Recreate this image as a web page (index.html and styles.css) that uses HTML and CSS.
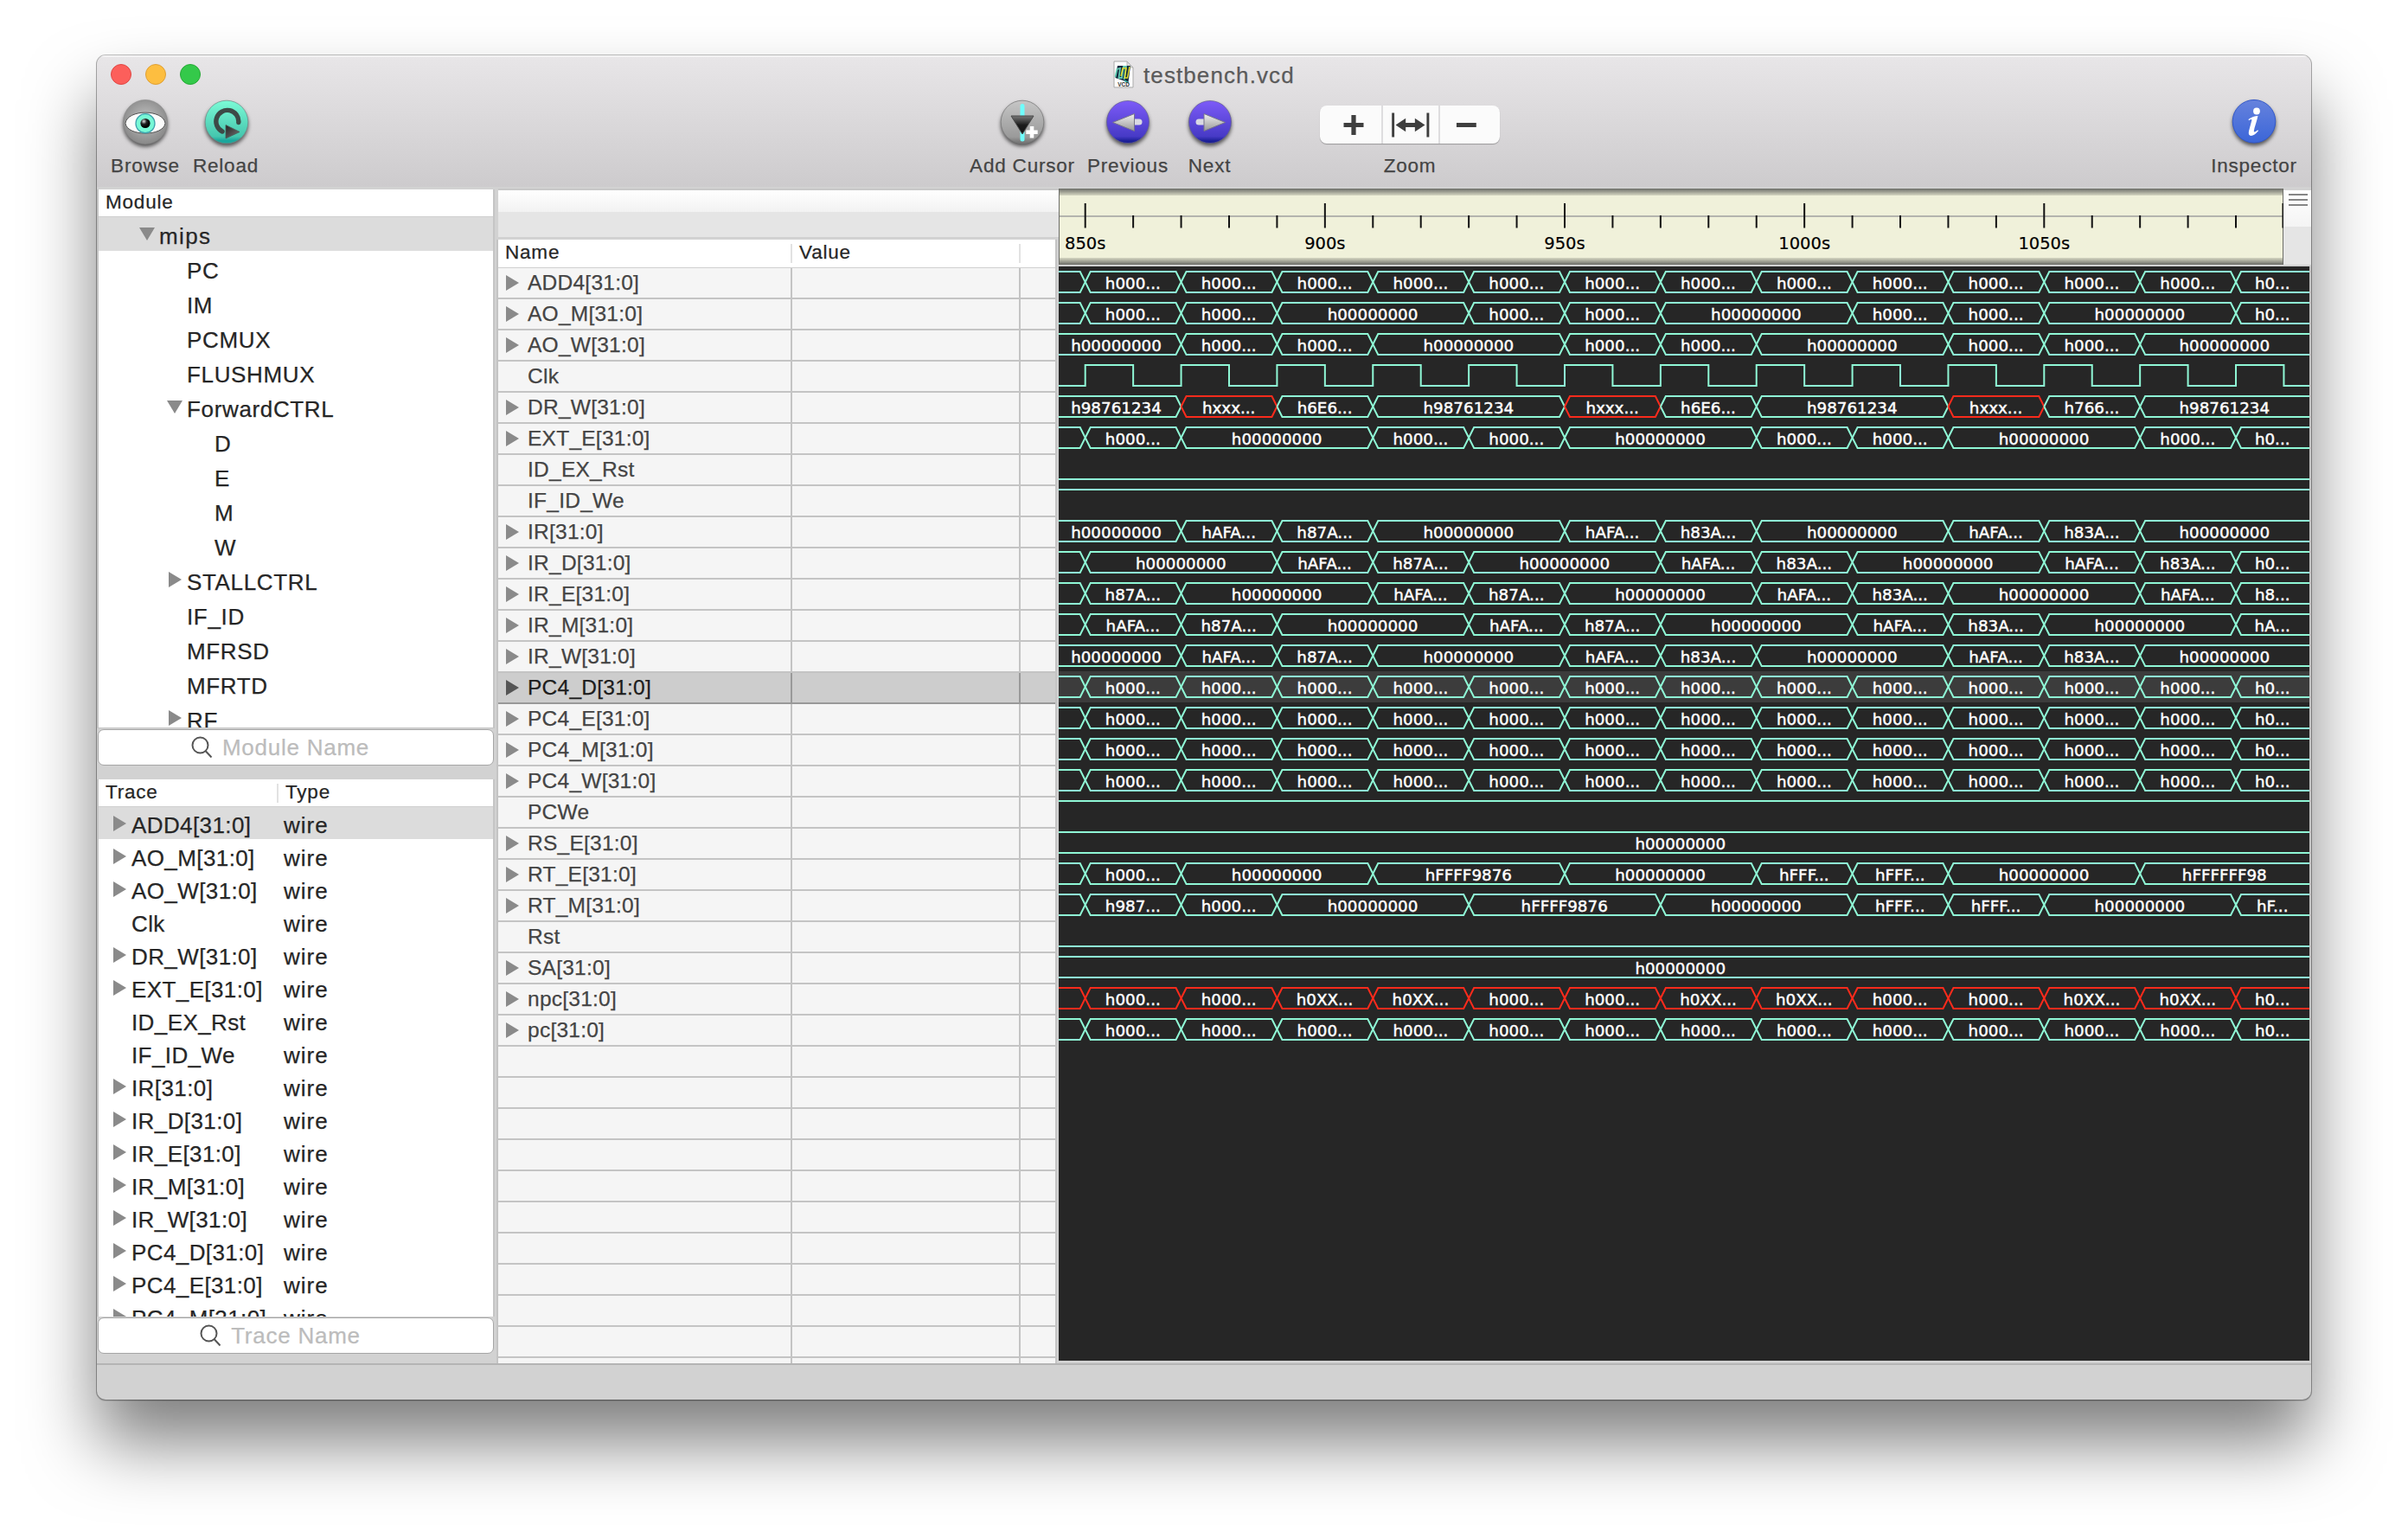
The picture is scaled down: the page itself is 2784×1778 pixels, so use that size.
FILE: index.html
```html
<!DOCTYPE html>
<html lang="en">
<head>
<meta charset="utf-8">
<title>testbench.vcd</title>
<link rel="stylesheet" href="styles.css">
</head>
<body>
<svg width="0" height="0" class="defs">
  <defs>
    <radialGradient id="eyeball" cx=".5" cy=".45" r=".55"><stop offset="0" stop-color="#c4c4c4"/><stop offset="1" stop-color="#888"/></radialGradient>
    <linearGradient id="cursorbg" x1="0" y1="0" x2="0" y2="1"><stop offset="0" stop-color="#c6c6c6"/><stop offset=".85" stop-color="#9a9a9a"/><stop offset="1" stop-color="#707070"/></linearGradient>
    <linearGradient id="teal" x1="0" y1="0" x2="0" y2="1"><stop offset="0" stop-color="#7bfbd6"/><stop offset=".84" stop-color="#45c6ae"/><stop offset=".93" stop-color="#1ba79d"/><stop offset="1" stop-color="#1ba79d"/></linearGradient>
    <linearGradient id="violet" x1="0" y1="0" x2="0" y2="1"><stop offset="0" stop-color="#7d5bf8"/><stop offset=".84" stop-color="#473ac6"/><stop offset=".95" stop-color="#1b1f96"/></linearGradient>
    <linearGradient id="blue" x1="0" y1="0" x2="0" y2="1"><stop offset="0" stop-color="#6682dd"/><stop offset="1" stop-color="#3b66d8"/></linearGradient>
    <linearGradient id="silver" x1="0" y1="0" x2="0" y2="1"><stop offset="0" stop-color="#f0f0f0"/><stop offset="1" stop-color="#999"/></linearGradient>
    <linearGradient id="dark" x1="0" y1="0" x2="0" y2="1"><stop offset="0" stop-color="#777"/><stop offset=".5" stop-color="#1c1c1c"/><stop offset="1" stop-color="#111"/></linearGradient>
    <linearGradient id="play" x1="0" y1="0" x2="1" y2="1"><stop offset="0" stop-color="#222"/><stop offset="1" stop-color="#777"/></linearGradient>
    <radialGradient id="pupil" cx=".35" cy=".3" r=".6"><stop offset="0" stop-color="#ddd"/><stop offset=".5" stop-color="#222"/><stop offset="1" stop-color="#000"/></radialGradient>
    <linearGradient id="edgeTop" x1="0" y1="0" x2="0" y2="1"><stop offset="0" stop-color="#6c6d68"/><stop offset="1" stop-color="#d6d7c2"/></linearGradient>
    <linearGradient id="edgeBottom" x1="0" y1="0" x2="0" y2="1"><stop offset="0" stop-color="#d6d7c2"/><stop offset="1" stop-color="#6c6d68"/></linearGradient>
  </defs>
</svg>

<main class="window">
  <header class="chrome">
    <div class="titlebar">
      <div class="lights"><i class="light close"></i><i class="light minimize"></i><i class="light expand"></i></div>
      <div class="title">
        <svg width="24" height="32" viewBox="0 0 24 32">
          <path d="M1 1H16L23 8V31H1Z" fill="#fdfdfd" stroke="#a9a9a9"/>
          <path d="M16 1V8H23Z" fill="#ddd" stroke="#aaa" stroke-width=".8"/>
          <path d="M5 6L20 6L17.500 25L2.500 20Z" fill="#10283e"/>
          <path d="M2.500 19L4.500 10L8 9L6.500 20H10L12 7L15 7L12.500 22" fill="none" stroke="#62c9b0" stroke-width="1.800"/>
          <path d="M9 18L11 9H15L13.500 20L16.500 20L19 7" fill="none" stroke="#e2d92c" stroke-width="1.500"/>
          <path d="M13 23L18 26" stroke="#2aa9a0" stroke-width="1.500"/>
          <text x="12" y="30" class="doctype">VCD</text>
        </svg>
        <span>testbench.vcd</span>
      </div>
    </div>
    <div class="tools">
      <div class="group left">
        <div class="tool small">
          <svg class="orb" width="60" height="60" viewBox="-30 -30 60 60">
            <circle r="25.500" fill="url(#eyeball)" stroke="#888" stroke-width=".6"/>
            <path d="M-23 1.500C-21 -15 21 -15 23 1.500C21 17 -21 17 -23 1.500Z" fill="#fbfbfb" stroke="#555" stroke-width="1"/>
            <circle cy="1.700" r="11" fill="#78f8d6" stroke="#3fa3ae" stroke-width="1.300"/>
            <circle cy="1.500" r="5.600" fill="url(#pupil)"/>
          </svg>
          <span>Browse</span>
        </div>
        <div class="tool small">
          <svg class="orb" width="60" height="60" viewBox="-30 -30 60 60">
            <circle r="24.800" fill="url(#teal)" stroke="#6b8d86" stroke-width=".7"/>
            <path d="M-5 11A13 13 0 1 1 13.800 .5" fill="none" stroke="#3d4a47" stroke-width="5.400" stroke-linecap="round"/>
            <path d="M-1 3.500L15 11.500L-1 19Z" fill="url(#play)" stroke="#4a5a57" stroke-width=".8"/>
          </svg>
          <span class="reload">Reload</span>
        </div>
      </div>
      <div class="group middle">
        <div class="tool wide">
          <svg class="orb" width="60" height="60" viewBox="-30 -30 60 60">
            <circle r="24.800" fill="url(#cursorbg)" stroke="#7b7b7b" stroke-width=".8"/>
            <path d="M0 -18.500V20" stroke="#6ffcfb" stroke-width="5" stroke-linecap="round"/>
            <path d="M-13 -7H13L0 14Z" fill="url(#dark)" stroke="#4a4a4a"/>
            <path d="M11 5V18.500M4.300 11.800H17.700" stroke="#fff" stroke-width="4.600"/>
          </svg>
          <span>Add Cursor</span>
        </div>
        <div class="tool prev">
          <svg class="orb" width="60" height="60" viewBox="-30 -30 60 60">
            <circle r="24.500" fill="url(#violet)" stroke="#66628e" stroke-width=".7"/>
            <rect x="3" y="-3.500" width="13.500" height="7" rx="3.500" fill="#d9d9e3"/>
            <path d="M-17.500 .5L7.500 -9.500V10.500Z" fill="url(#silver)" stroke="#77758a"/>
          </svg>
          <span>Previous</span>
        </div>
        <div class="tool next">
          <svg class="orb" width="60" height="60" viewBox="-30 -30 60 60">
            <circle r="24.500" fill="url(#violet)" stroke="#66628e" stroke-width=".7"/>
            <rect x="-16.500" y="-3.500" width="13.500" height="7" rx="3.500" fill="#d9d9e3"/>
            <path d="M17.500 .5L-7 -9.500V10.500Z" fill="url(#silver)" stroke="#77758a"/>
          </svg>
          <span>Next</span>
        </div>
        <div class="tool zoom">
          <div class="segments">
            <svg width="71" height="44" viewBox="0 0 71 44"><path d="M39 11V34M27.500 22.500H50.500" stroke="#3f3f3f" stroke-width="5.200"/></svg>
            <svg width="66" height="44" viewBox="0 0 66 44"><path d="M12 8V37M53.500 8V37" stroke="#3f3f3f" stroke-width="3"/><path d="M22 22.500H43" stroke="#3f3f3f" stroke-width="5"/><path d="M15 22.500L27 14.500V30.500ZM50 22.500L38 14.500V30.500Z" fill="#3f3f3f"/></svg>
            <svg width="71" height="44" viewBox="0 0 71 44"><path d="M19.500 22.500H43" stroke="#3f3f3f" stroke-width="5.200"/></svg>
          </div>
          <span>Zoom</span>
        </div>
      </div>
      <div class="tool inspector">
        <svg class="orb" width="60" height="60" viewBox="-30 -30 60 60">
          <circle cy="-.7" r="24.800" fill="url(#blue)" stroke="#3157c9"/>
          <circle cx="3" cy="-12.500" r="3.900" fill="#fff"/>
          <path d="M-6.500 -3Q-1 -7 4.500 -7C3 0 .5 6 -.2 10.500Q-.2 13 4.300 9.200L5 10.300Q.5 15.700 -3.500 16Q-7 15.500 -6 10.500L-2.500 -2.500Q-3 -4 -6 -1.800Z" fill="#fff"/>
        </svg>
        <span>Inspector</span>
      </div>
    </div>
  </header>

  <div class="body">
    <aside class="sidebar">
      <section class="pane modules">
        <div class="head"><span>Module</span></div>
        <div class="list" id="modules"></div>
      </section>
      <div class="search">
        <svg width="28" height="28" viewBox="0 0 28 28"><circle cx="11.500" cy="11.500" r="9"/><path d="M17.500 18L24.500 25.500"/></svg>
        <span>Module Name</span>
      </div>
      <section class="pane traces">
        <div class="head"><span class="c1">Trace</span><span>Type</span></div>
        <div class="list" id="traces"></div>
      </section>
      <div class="search">
        <svg width="28" height="28" viewBox="0 0 28 28"><circle cx="11.500" cy="11.500" r="9"/><path d="M17.500 18L24.500 25.500"/></svg>
        <span>Trace Name</span>
      </div>
    </aside>

    <section class="signals">
      <div class="strip"></div>
      <div class="grid">
        <div class="head"><span class="name">Name</span><span class="value">Value</span></div>
        <div class="rows" id="signals"></div>
      </div>
    </section>

    <section class="scope">
      <div class="rulerbar">
        <svg id="ruler" width="1416" height="88"></svg>
        <div class="corner"><div class="menu"><i></i><i></i><i></i></div></div>
      </div>
      <svg id="waves" width="1446" height="1265"></svg>
    </section>
  </div>
  <footer class="status"></footer>
</main>
<script src="app.js"></script>
</body>
</html>
```
FILE: styles.css
```css
* { box-sizing: border-box; }
body {
  margin: 0;
  width: 2784px;
  height: 1778px;
  padding: 64px 112px;
  overflow: hidden;
  background: #fff;
  font-family: "Liberation Sans", Arial, sans-serif;
  color: #262626;
  -webkit-text-stroke: .25px;
}
.defs { position: absolute; }
svg { display: block; flex: none; }
.window {
  width: 2560px;
  height: 1554px;
  border-radius: 10px;
  overflow: hidden;
  background: #d2d2d2;
  display: flex;
  flex-direction: column;
  box-shadow: 0 0 0 1px rgba(0,0,0,.24), 0 1px 0 1px rgba(0,0,0,.12), 0 50px 80px rgba(0,0,0,.5);
}

/* title bar and toolbar */
.chrome {
  height: 152px;
  flex: none;
  background: linear-gradient(#e8e6e8, #cdcbcd);
  box-shadow: inset 0 2px 0 #f3f2f3;
  color: #444;
}
.titlebar { height: 48px; display: grid; grid-template-columns: 1175px 1fr; }
.lights { display: flex; gap: 16px; padding: 10px 0 0 16px; }
.light { width: 24px; height: 24px; border-radius: 50%; border: 1px solid; }
.close { background: #fc5f5b; border-color: #df4744; }
.minimize { background: #fdbe40; border-color: #de9f34; }
.expand { background: #34c94a; border-color: #26a935; }
.title { display: flex; gap: 11px; padding-top: 6px; font-size: 26px; line-height: 34px; letter-spacing: 1.1px; color: #5a5a5a; }
.doctype { font-size: 6.5px; font-weight: bold; text-anchor: middle; letter-spacing: 0; fill: #333; }
.tools { display: flex; font-size: 22.5px; letter-spacing: .8px; }
.group { display: flex; }
.group.left { width: 1005px; padding-left: 14px; gap: 10px; }
.tool { display: flex; flex-direction: column; align-items: center; white-space: nowrap; line-height: 26px; }
.tool span { margin-top: 8px; }
.tool .reload { margin-right: 2px; }
.orb { margin-top: -1px; filter: drop-shadow(0 3px 2px rgba(0,0,0,.6)); }
.small { width: 84px; }
.wide { width: 130px; }
.prev { width: 100px; margin-left: 7px; }
.next { width: 75px; margin-left: 7px; }
.zoom { width: 208px; margin-left: 90px; }
.segments { display: flex; height: 44px; margin: 10px 0 5px; background: #fbfbfb; border-radius: 8px; box-shadow: 0 1px 1px rgba(0,0,0,.28); }
.segments svg + svg { border-left: 2px solid #dedddf; }
.inspector { width: 110px; margin-left: auto; margin-right: 11px; }

/* body */
.body { height: 1360px; flex: none; display: flex; }
.status { height: 42px; border-top: 2px solid #b4b4b4; }
.head { height: 32px; display: flex; font-size: 22.5px; line-height: 30px; letter-spacing: .8px; background: #fff; border-bottom: 1px solid #d0d0d0; position: relative; z-index: 1; }

.sidebar { width: 460px; flex: none; padding-top: 3px; }
.pane { background: #fff; border: solid #c5c5c5; border-width: 0 2px; overflow: hidden; }
.modules { height: 623px; border-bottom-width: 1px; }
.traces { height: 621px; margin-top: 16px; }
.pane .head { padding-left: 8px; }
.list { margin-top: -1px; font-size: 26px; letter-spacing: .65px; white-space: nowrap; }
.row { display: flex; }
.row > span { line-height: 34px; padding-top: 6px; }
.modules .row { height: 40px; }
.traces .row { height: 38px; }
.traces .row > span { line-height: 32px; }
.list .selected { background: #dcdcdc; }
.modules .selected { letter-spacing: 1.4px; }
.arrow { width: 15px; height: 18px; margin-top: 11px; flex: none; background: #8a8a8a; clip-path: polygon(0 0, 100% 50%, 0 100%); }
.arrow.open { width: 18px; height: 15px; margin-top: 13px; clip-path: polygon(0 0, 100% 0, 50% 100%); }
.arrow.none { background: none; }
.traces .arrow { margin-left: 17px; margin-right: 6px; }
.traces .trace { width: 176px; letter-spacing: .4px; }
.traces .type { letter-spacing: 1px; }
.traces .c1 { width: 208px; background: linear-gradient(#e2e2e2, #e2e2e2) 198px 5px / 2px 22px no-repeat; }
.search {
  height: 42px; margin: 1px 1px 0 1px; padding-right: 37px; background: #fff; border: 1px solid #a6a6a6; border-radius: 7px;
  display: flex; align-items: center; justify-content: center; gap: 9px; font-size: 26px; line-height: 38px; letter-spacing: .75px; color: #bcbcbc;
}
.search svg { fill: none; stroke: #555; stroke-width: 2; }

.signals { width: 652px; flex: none; padding: 2px 0 0 2px; }
.strip { height: 57px; margin-left: 2px; background: linear-gradient(#fff, #f2f2f2 25px, #e5e5e5 25px, #e5e5e5 54px, #d0d0d0 54px); border-top: 2px solid #c8c8c8; }
.grid { height: 1299px; border: solid #c4c4c4; border-width: 0 2px; margin-top: 2px; margin-right: 2px; overflow: hidden; background: #f5f5f5; }
.grid .name { width: 338px; padding-left: 8px; border: 0; }
.grid .value { width: 266px; padding-left: 10px; }
.grid .head { background: linear-gradient(#e2e2e2, #e2e2e2) 338px 5px / 2px 22px no-repeat, linear-gradient(#e2e2e2, #e2e2e2) 602px 5px / 2px 22px no-repeat, #fff; height: 33px; }
.signal {
  height: 36px; border-bottom: 2px solid #c4c4c4; display: flex; align-items: center; padding-left: 9px;
  font-size: 24.5px; line-height: 34px; letter-spacing: .25px; color: #444;
  background: linear-gradient(#c4c4c4, #c4c4c4) 338px 0 / 2px 36px no-repeat, linear-gradient(#c4c4c4, #c4c4c4) 602px 0 / 2px 36px no-repeat;
}
.signal .arrow { margin: 0 10px 0 0; }
.signal.selected {
  color: #1c1c1c; border-color: #999;
  background: linear-gradient(#999, #999) 338px 0 / 2px 36px no-repeat, linear-gradient(#999, #999) 602px 0 / 2px 36px no-repeat, #cdcdcd;
}
.signal.selected .arrow { background: #555; }

/* waveform area */
.scope { flex: 1; padding-top: 2px; }
.rulerbar { display: flex; height: 90px; }
.corner { width: 32px; height: 86px; margin-top: 2px; background: linear-gradient(#fff, #f4f4f4 42px, #e5e5e5 42px); }
.menu { display: flex; flex-direction: column; gap: 4px; padding: 4px 4px 0 6px; }
.menu i { height: 2px; background: #858585; }
#waves { background: #262626; box-shadow: 2px 0 0 #c4c4c4; }
#waves path { fill: none; stroke: #8ff8d6; stroke-width: 2; }
#waves path.unknown { stroke: #fb2b1c; }
#waves text { font: 18.3px "DejaVu Sans", sans-serif; fill: #fff; stroke: #fff; stroke-width: .45px; text-anchor: middle; }
#ruler text { font: 19.5px "DejaVu Sans", sans-serif; fill: #000; stroke: #000; stroke-width: .2px; text-anchor: middle; }
```
FILE: app.js
```js
const modules = [
  ["mips", 0, "open"], ["PC", 1], ["IM", 1], ["PCMUX", 1], ["FLUSHMUX", 1],
  ["ForwardCTRL", 1, "open"], ["D", 2], ["E", 2], ["M", 2], ["W", 2],
  ["STALLCTRL", 1, "closed"], ["IF_ID", 1], ["MFRSD", 1], ["MFRTD", 1], ["RF", 1, "closed"]
];
document.getElementById("modules").innerHTML = modules.map(([name, depth, state], i) => {
  const textX = 70 + depth * 32;
  const arrowX = textX - (state === "open" ? 23 : 21);
  const width = state === "open" ? 18 : 15;
  const arrow = state
    ? `<i class="arrow ${state}" style="margin-left:${arrowX}px;margin-right:${textX - arrowX - width}px"></i><span>`
    : `<span style="margin-left:${textX}px">`;
  return `<div class="row${i ? "" : " selected"}">${arrow}${name}</span></div>`;
}).join("");

const Z = "h00000000", z = "h000...";
// Segment lists: [edge index where the value starts, label, unknown]
const each = (values) => values.map((v, i) => [i, v]);
const steady = each([...Array(12).fill(z), "h0..."]);
const fetch3 = [[-1, Z], [1, "hAFA..."], [2, "h87A..."], [3, Z], [5, "hAFA..."], [6, "h83A..."], [7, Z], [9, "hAFA..."], [10, "h83A..."], [11, Z]];
const V = "h98761234", X = "hxxx...";
const signals = [
  ["ADD4[31:0]", steady],
  ["AO_M[31:0]", [[0, z], [1, z], [2, Z], [4, z], [5, z], [6, Z], [8, z], [9, z], [10, Z], [12, "h0..."]]],
  ["AO_W[31:0]", [[-1, Z], [1, z], [2, z], [3, Z], [5, z], [6, z], [7, Z], [9, z], [10, z], [11, Z]]],
  ["Clk", "clock"],
  ["DR_W[31:0]", [[-1, V], [1, X, 1], [2, "h6E6..."], [3, V], [5, X, 1], [6, "h6E6..."], [7, V], [9, X, 1], [10, "h766..."], [11, V]]],
  ["EXT_E[31:0]", [[0, z], [1, Z], [3, z], [4, z], [5, Z], [7, z], [8, z], [9, Z], [11, z], [12, "h0..."]]],
  ["ID_EX_Rst", "low"],
  ["IF_ID_We", "high"],
  ["IR[31:0]", fetch3],
  ["IR_D[31:0]", [[0, Z], [2, "hAFA..."], [3, "h87A..."], [4, Z], [6, "hAFA..."], [7, "h83A..."], [8, Z], [10, "hAFA..."], [11, "h83A..."], [12, "h0..."]]],
  ["IR_E[31:0]", [[0, "h87A..."], [1, Z], [3, "hAFA..."], [4, "h87A..."], [5, Z], [7, "hAFA..."], [8, "h83A..."], [9, Z], [11, "hAFA..."], [12, "h8..."]]],
  ["IR_M[31:0]", [[0, "hAFA..."], [1, "h87A..."], [2, Z], [4, "hAFA..."], [5, "h87A..."], [6, Z], [8, "hAFA..."], [9, "h83A..."], [10, Z], [12, "hA..."]]],
  ["IR_W[31:0]", fetch3],
  ["PC4_D[31:0]", steady],
  ["PC4_E[31:0]", steady],
  ["PC4_M[31:0]", steady],
  ["PC4_W[31:0]", steady],
  ["PCWe", "high"],
  ["RS_E[31:0]", [[-1, Z]]],
  ["RT_E[31:0]", [[0, z], [1, Z], [3, "hFFFF9876"], [5, Z], [7, "hFFF..."], [8, "hFFF..."], [9, Z], [11, "hFFFFFF98"]]],
  ["RT_M[31:0]", [[0, "h987..."], [1, z], [2, Z], [4, "hFFFF9876"], [6, Z], [8, "hFFF..."], [9, "hFFF..."], [10, Z], [12, "hF..."]]],
  ["Rst", "low"],
  ["SA[31:0]", [[-1, Z]]],
  ["npc[31:0]", each([z, z, "h0XX...", "h0XX...", z, z, "h0XX...", "h0XX...", z, z, "h0XX...", "h0XX...", "h0..."]), true],
  ["pc[31:0]", steady]
];
const SELECTED = 13;
const arrowFor = (name) => `<i class="arrow${name.includes("[") ? "" : " none"}"></i>`;

document.getElementById("traces").innerHTML = signals.slice(0, 16).map(([name], i) =>
  `<div class="row${i ? "" : " selected"}">${arrowFor(name)}<span class="trace">${name}</span><span class="type">wire</span></div>`
).join("");

document.getElementById("signals").innerHTML = Array.from({ length: 36 }, (_, i) =>
  `<div class="signal${i === SELECTED ? " selected" : ""}">${signals[i] ? arrowFor(signals[i][0]) + `<span>${signals[i][0]}</span>` : ""}</div>`
).join("");

// Waveforms
const edge = (k) => k < 0 ? -8 : k > 12 ? 1446 : 30.7 + k * 110.86;
let out = `<rect x="0" y="${468}" width="1446" height="36" fill="#3c3c3c"/>`;
signals.forEach(([, wave, unknown], row) => {
  const top = 6 + row * 36, bottom = top + 24, mid = top + 12;
  if (wave === "low" || wave === "high") {
    out += `<path d="M0 ${wave === "low" ? bottom : top}H1446"/>`;
    return;
  }
  if (wave === "clock") {
    let d = `M0 ${bottom}`;
    for (let k = 0; k <= 12; k++) {
      d += `H${edge(k)}V${top}`;
      d += `H${edge(k) + 55.43}V${bottom}`;
    }
    out += `<path d="${d}H1446"/>`;
    return;
  }
  const segs = wave[0][0] === 0 ? [[-1, ""], ...wave] : wave;
  const drawn = segs.map(([start, label, bad], i) => {
    const end = i + 1 < segs.length ? segs[i + 1][0] : 13;
    const a = edge(start), b = edge(end);
    const l = start < 0 ? 0 : 6, r = end > 12 ? 0 : 6;
    let d = start < 0 ? `M${a} ${top}` : `M${a} ${mid}L${a + l} ${top}`;
    d += `H${b - r}`;
    d += r ? `L${b} ${mid}L${b - r} ${bottom}` : `M${b} ${bottom}`;
    d += `H${a + l}`;
    if (l) d += `L${a} ${mid}`;
    const text = label ? `<text x="${(a + b) / 2 - .3}" y="${top + 19.5}">${label}</text>` : "";
    return `<path${bad || unknown ? ' class="unknown"' : ""} d="${d}"/>${text}`;
  });
  out += drawn.join("");
});
document.getElementById("waves").innerHTML = out;

// Time ruler
let r = `<rect width="1416" height="88" fill="#f0f1da"/>
<rect width="1416" height="8" fill="url(#edgeTop)"/><rect y="80" width="1416" height="8" fill="url(#edgeBottom)"/>
<rect y="31" width="1416" height="2" fill="#b4b4ae"/>
<path d="M.5 0V88M1415.500 0V88" stroke="#6c6d68"/>`;
for (let n = 0; n <= 25; n++) {
  const x = Math.min(30.7 + n * 55.43, 1415.5), major = n % 5 === 0;
  r += `<path d="M${x} ${major ? 17 : 31}V45.500" stroke="#111" stroke-width="2"/>`;
  if (major && n < 25) r += `<text x="${x}" y="69.500">${850 + n * 10}s</text>`;
}
document.getElementById("ruler").innerHTML = r;
```
